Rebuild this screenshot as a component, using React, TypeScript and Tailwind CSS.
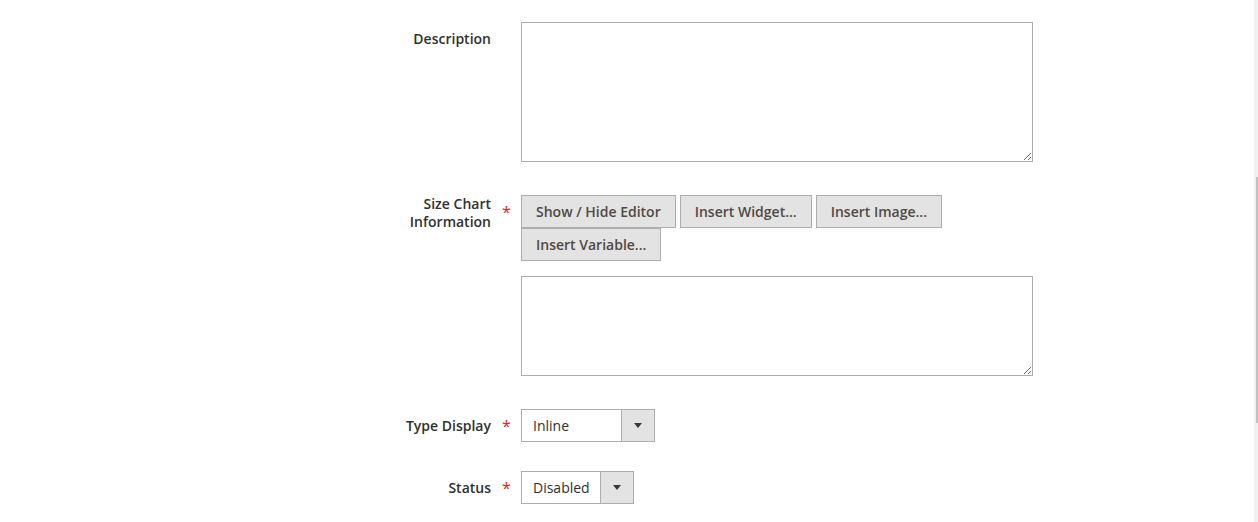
const font = { fontFamily: '"Open Sans", "Noto Sans", sans-serif' };

function Asterisk() {
  return (
    <div className="w-[30px] h-[33px] shrink-0 flex justify-center">
      <span className="text-[#e22626] text-[16px] leading-[34px] font-normal pl-[1px]">*</span>
    </div>
  );
}

function EditorButton({ label }: { label: string }) {
  return (
    <button
      type="button"
      className="h-[33px] px-[14px] bg-[#e3e3e3] border border-[#adadad] text-[#514943] text-[14px] font-semibold leading-[31px] whitespace-nowrap"
    >
      {label}
    </button>
  );
}

function Select({ value, width }: { value: string; width: string }) {
  return (
    <div className={`${width} h-[33px] flex border border-[#adadad] bg-white`}>
      <div className="flex-1 pl-[11px] text-[14px] leading-[31px] text-[#303030]">{value}</div>
      <div className="w-[33px] bg-[#e3e3e3] border-l border-[#adadad] flex items-center justify-center">
        <svg width="8" height="5" viewBox="0 0 8 5">
          <path d="M0 0h8L4 5z" fill="#41362f" />
        </svg>
      </div>
    </div>
  );
}

export default function App() {
  return (
    <div className="w-full h-[522px] flex bg-white overflow-hidden" style={font}>
      <div className="flex-1 pt-[22px]">
        {/* Description */}
        <div className="flex">
          <label className="w-[491px] shrink-0 text-right pt-[8px] text-[14px] leading-[18px] font-semibold text-[#303030]">
            Description
          </label>
          <div className="w-[30px] shrink-0" />
          <textarea className="w-[512px] h-[140px] border border-[#adadad] bg-white outline-none" />
        </div>

        {/* Size Chart Information */}
        <div className="flex mt-[33px]">
          <label className="w-[491px] shrink-0 text-right text-[14px] leading-[18px] font-semibold text-[#303030]">
            Size Chart
            <br />
            Information
          </label>
          <Asterisk />
          <div className="w-[512px]">
            <div className="flex flex-wrap gap-x-[4px] w-[430px]">
              <EditorButton label="Show / Hide Editor" />
              <EditorButton label="Insert Widget..." />
              <EditorButton label="Insert Image..." />
              <EditorButton label="Insert Variable..." />
            </div>
            <textarea className="mt-[15px] w-[512px] h-[100px] border border-[#adadad] bg-white outline-none block" />
          </div>
        </div>

        {/* Type Display */}
        <div className="flex mt-[33px]">
          <label className="w-[491px] shrink-0 text-right pt-[8px] text-[14px] leading-[18px] font-semibold text-[#303030]">
            Type Display
          </label>
          <Asterisk />
          <Select value="Inline" width="w-[134px]" />
        </div>

        {/* Status */}
        <div className="flex mt-[29px]">
          <label className="w-[491px] shrink-0 text-right pt-[8px] text-[14px] leading-[18px] font-semibold text-[#303030]">
            Status
          </label>
          <Asterisk />
          <Select value="Disabled" width="w-[113px]" />
        </div>
      </div>

      {/* scrollbar */}
      <div className="w-[4px] shrink-0 bg-[#f1f1f1] pt-[177px]">
        <div className="ml-[2px] w-[2px] h-[246px] bg-[#c1c1c1]" />
      </div>
    </div>
  );
}
